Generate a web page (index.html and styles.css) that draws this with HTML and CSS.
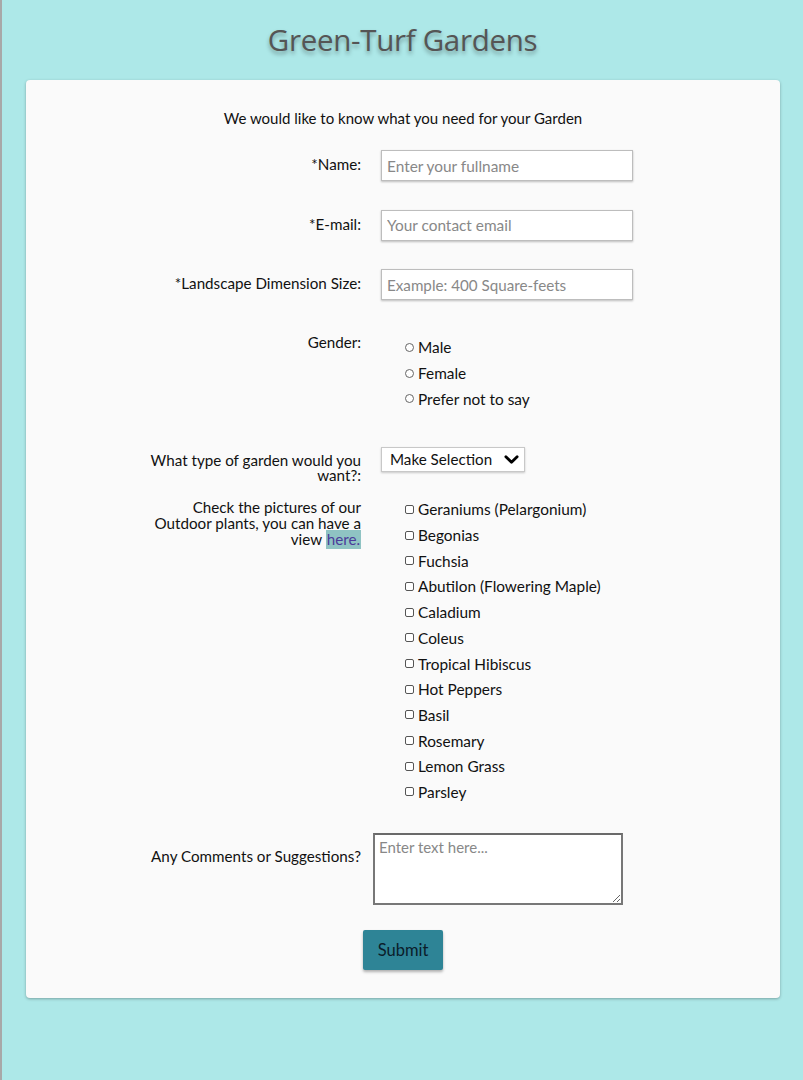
FILE: index.html
```html
<!DOCTYPE html>
<html lang="en">
<head>
<meta charset="utf-8">
<title>Green-Turf Gardens</title>
<link rel="stylesheet" href="styles.css">
</head>
<body>
<h1 class="title">Green-Turf Gardens</h1>
<main class="card">
  <p class="intro">We would like to know what you need for your Garden</p>
  <form class="form">
    <div class="row row-input">
      <label class="label" for="name">*Name:</label>
      <input class="field" id="name" type="text" placeholder="Enter your fullname">
    </div>
    <div class="row row-input">
      <label class="label" for="email">*E-mail:</label>
      <input class="field" id="email" type="email" placeholder="Your contact email">
    </div>
    <div class="row row-input">
      <label class="label" for="size">*Landscape Dimension Size:</label>
      <input class="field field-small" id="size" type="text" placeholder="Example: 400 Square-feets">
    </div>
    <div class="row row-gender">
      <span class="label">Gender:</span>
      <ul class="options">
        <li><label class="opt"><input class="radio" type="radio" name="g">Male</label></li>
        <li><label class="opt"><input class="radio" type="radio" name="g">Female</label></li>
        <li><label class="opt"><input class="radio" type="radio" name="g">Prefer not to say</label></li>
      </ul>
    </div>
    <div class="row row-select">
      <label class="label label-wrap" for="type">What type of garden would you want?:</label>
      <div class="select">
        <span>Make Selection</span>
        <svg class="chev" viewBox="0 0 16 16" width="15" height="15"><path d="M2 5 L8 11 L14 5" fill="none" stroke="#000" stroke-width="3" stroke-linecap="round" stroke-linejoin="round"/></svg>
      </div>
    </div>
    <div class="row row-check">
      <span class="label label-wrap label-check">Check the pictures of our Outdoor plants, you can have a view <a class="link" href="#">here.</a></span>
      <ul class="options">
        <li><label class="opt"><input class="check" type="checkbox">Geraniums (Pelargonium)</label></li>
        <li><label class="opt"><input class="check" type="checkbox">Begonias</label></li>
        <li><label class="opt"><input class="check" type="checkbox">Fuchsia</label></li>
        <li><label class="opt"><input class="check" type="checkbox">Abutilon (Flowering Maple)</label></li>
        <li><label class="opt"><input class="check" type="checkbox">Caladium</label></li>
        <li><label class="opt"><input class="check" type="checkbox">Coleus</label></li>
        <li><label class="opt"><input class="check" type="checkbox">Tropical Hibiscus</label></li>
        <li><label class="opt"><input class="check" type="checkbox">Hot Peppers</label></li>
        <li><label class="opt"><input class="check" type="checkbox">Basil</label></li>
        <li><label class="opt"><input class="check" type="checkbox">Rosemary</label></li>
        <li><label class="opt"><input class="check" type="checkbox">Lemon Grass</label></li>
        <li><label class="opt"><input class="check" type="checkbox">Parsley</label></li>
      </ul>
    </div>
    <div class="row row-text">
      <label class="label label-comments" for="comments">Any Comments or Suggestions?</label>
      <textarea class="area" id="comments" placeholder="Enter text here..."></textarea>
    </div>
    <div class="actions">
      <button class="submit" type="button">Submit</button>
    </div>
  </form>
</main>
</body>
</html>
```
FILE: styles.css
```css
html, body {
  margin: 0;
  padding: 0;
}
body {
  background: #ade8e8;
  border-left: 2px solid #a8a8a8;
  min-height: 1080px;
  box-sizing: border-box;
  font-family: "Lato", "Open Sans", sans-serif;
  color: #111;
}
.title {
  margin: 0;
  padding-top: 21px;
  height: 58px;
  box-sizing: border-box;
  text-align: center;
  font-family: "Open Sans", sans-serif;
  font-weight: 500;
  font-size: 29.5px;
  line-height: 38px;
  color: #555;
  text-shadow: 0 3px 4px rgba(0, 0, 0, 0.35);
  letter-spacing: -0.3px;
}
.card {
  margin: 22px 23px 0 24px;
  background: #fafafa;
  border-radius: 4px;
  box-shadow: 0 1px 3px rgba(0, 0, 0, 0.3);
  padding: 29px 0 28px;
}
.intro {
  margin: 0 0 23px;
  text-align: center;
  font-size: 15px;
  line-height: 18px;
}
.form {
  display: flex;
  flex-direction: column;
}
.row {
  display: grid;
  grid-template-columns: 215px 1fr;
  column-gap: 20px;
  padding-left: 120px;
}
.label {
  text-align: right;
  font-size: 15.2px;
  line-height: 18px;
}
.row-input {
  align-items: center;
  margin-bottom: 28.5px;
}
.row-input .label {
  margin-top: -3px;
}
.field {
  width: 252px;
  height: 31px;
  box-sizing: border-box;
  border: 1px solid #bdbdbd;
  box-shadow: 0 1px 2px rgba(0, 0, 0, 0.25);
  background: #fff;
  padding: 0 5px;
  font-family: inherit;
  font-size: 15.4px;
  color: #111;
  outline: none;
}
.field::placeholder { color: #888; }
.field-small { font-size: 15.2px; }
.row-gender {
  margin-top: 6px;
}
.row-gender .label {
  margin-top: -2px;
}
.options {
  list-style: none;
  margin: 0;
  padding: 0 0 0 24px;
}
.options li {
  height: 25.7px;
  display: flex;
  align-items: center;
}
.opt {
  display: flex;
  align-items: center;
  font-size: 15.4px;
  line-height: 18px;
}
.radio, .check {
  appearance: none;
  -webkit-appearance: none;
  margin: 0 4px 0 0;
  width: 9px;
  height: 9px;
  box-sizing: border-box;
  border: 1.3px solid #666;
  background: #fff;
}
.radio { border-radius: 50%; }
.check { border-radius: 2px; border-color: #555; }
.row-select {
  margin-top: 35px;
  align-items: start;
}
.label-wrap {
  line-height: 15.5px;
}
.row-select .label {
  padding-top: 6px;
}
.select {
  width: 144px;
  height: 25px;
  box-sizing: border-box;
  border: 1px solid #c8c8c8;
  box-shadow: 0 1px 2px rgba(0, 0, 0, 0.2);
  background: #fff;
  display: flex;
  align-items: center;
  justify-content: space-between;
  padding: 0 5px 0 8px;
  font-size: 15.2px;
}
.chev { display: block; }
.row-check {
  margin-top: 13px;
}
.label-check {
  line-height: 16px;
  padding-top: 2px;
}
.link {
  display: inline-block;
  line-height: 16px;
  color: #4b3a9a;
  background: #8fc3c3;
  text-decoration: none;
  padding: 0 1px;
  box-shadow: 0 -1px 0 #8fc3c3, 0 2px 0 #8fc3c3;
}
.row-text {
  margin-top: 28px;
  align-items: start;
}
.label-comments {
  padding-top: 14px;
}
.area {
  margin-left: -8px;
  width: 250px;
  height: 72px;
  box-sizing: border-box;
  border: 2px solid #777;
  border-top-color: #6a6a6a;
  background: #fff;
  padding: 3px 4px;
  font-family: inherit;
  font-size: 15px;
  resize: both;
  outline: none;
}
.area::placeholder { color: #888; }
.actions {
  display: flex;
  justify-content: center;
  margin-top: 25px;
}
.submit {
  width: 80px;
  height: 40px;
  background: #2e8496;
  color: #0b1c2a;
  border: none;
  border-radius: 2px;
  box-shadow: 0 2px 3px rgba(0, 0, 0, 0.3);
  font-family: inherit;
  font-size: 16.5px;
  cursor: pointer;
}
```
